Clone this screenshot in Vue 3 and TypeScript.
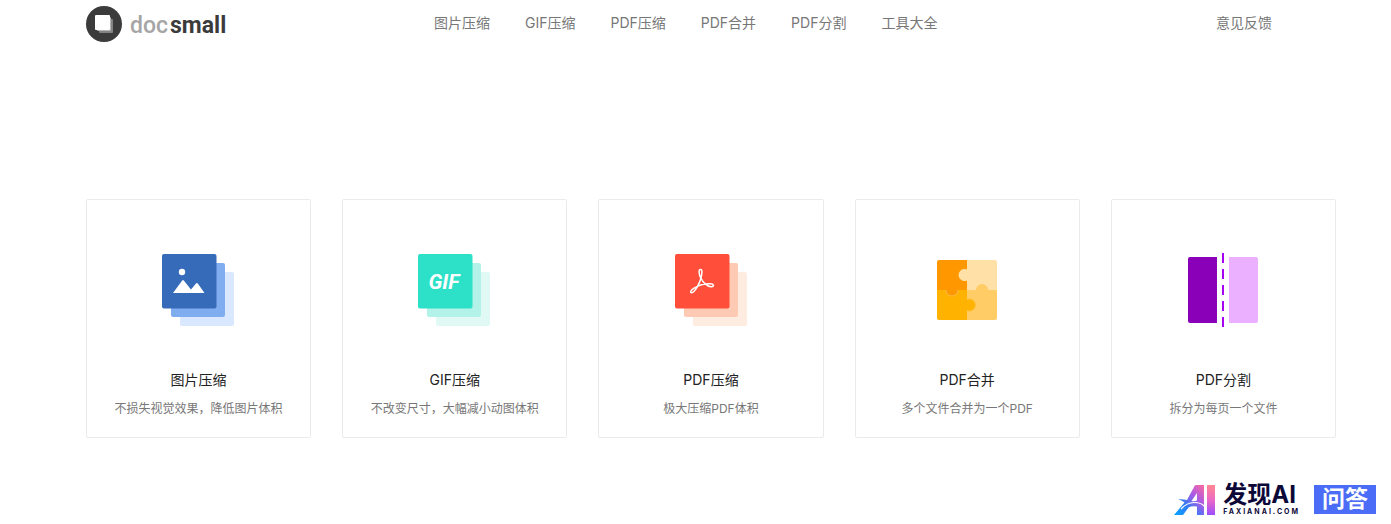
<script setup lang="ts">
type Kind = 'image' | 'gif' | 'pdf' | 'merge' | 'split'

interface Tool {
  kind: Kind
  title: string
  desc: string
  layers?: [string, string, string]
}

const links: string[] = ['图片压缩', 'GIF压缩', 'PDF压缩', 'PDF合并', 'PDF分割', '工具大全']

const tools: Tool[] = [
  { kind: 'image', title: '图片压缩', desc: '不损失视觉效果，降低图片体积', layers: ['#366bba', '#80adf0', '#d9e8ff'] },
  { kind: 'gif', title: 'GIF压缩', desc: '不改变尺寸，大幅减小动图体积', layers: ['#2de0c8', '#b3f2e8', '#e0f9f5'] },
  { kind: 'pdf', title: 'PDF压缩', desc: '极大压缩PDF体积', layers: ['#ff4f3a', '#ffcab3', '#ffece0'] },
  { kind: 'merge', title: 'PDF合并', desc: '多个文件合并为一个PDF' },
  { kind: 'split', title: 'PDF分割', desc: '拆分为每页一个文件' },
]
</script>

<template>
  <div class="page">
    <header class="header">
      <a class="logo" href="#" aria-label="docsmall">
        <svg class="logo-mark" viewBox="0 0 36 36" aria-hidden="true">
          <circle cx="18" cy="18" r="18" fill="#3b3b3b" />
          <rect x="13" y="13" width="14" height="14" rx="1" fill="#848484" />
          <rect x="11" y="11" width="14" height="14" rx="1" fill="#b5b5b5" />
          <rect x="9" y="9" width="15" height="15" rx="1" fill="#fff" />
        </svg>
        <span class="logo-text"><span class="logo-doc">doc</span><span class="logo-small">small</span></span>
      </a>
      <nav class="nav">
        <a v-for="link in links" :key="link" href="#">{{ link }}</a>
      </nav>
      <a class="feedback" href="#">意见反馈</a>
    </header>

    <main class="tools">
      <a v-for="tool in tools" :key="tool.kind" class="card" href="#">
        <svg class="icon" viewBox="0 0 74 74" aria-hidden="true">
          <g v-if="tool.layers" :transform="tool.kind === 'pdf' ? 'translate(1 0)' : undefined">
            <rect x="18" y="19" width="54" height="54" rx="2" :fill="tool.layers[2]" />
            <rect x="9" y="10" width="54" height="54" rx="2" :fill="tool.layers[1]" />
            <rect x="0" y="1" width="54.5" height="54.5" rx="2" :fill="tool.layers[0]" />
            <template v-if="tool.kind === 'image'">
              <circle cx="20" cy="19" r="3.2" fill="#fff" />
              <path d="M11 40 20.2 27.5Q21 26.5 21.8 27.5L29 36.6 34 30.5Q35 29.5 35.8 30.5L42.5 40Z" fill="#fff" />
            </template>
            <text v-else-if="tool.kind === 'gif'" class="gif" x="26" y="36" text-anchor="middle">GIF</text>
            <g v-else fill="none" stroke="#fff" stroke-width="1.5" stroke-linejoin="round" stroke-linecap="round">
              <path d="M25.5 16.5C23.2 16.5 24 21 25.5 24.5 28 29.5 32.5 34 36.500 33.700 39.500 33.500 39 30.800 35.500 30.700 30.500 30.500 24 32 19.500 34.800 15.500 37.200 14.800 39.800 16.700 39.700 19.500 39.500 24.500 31 26 25 27 20.500 27.600 16.500 25.500 16.500Z" />
            </g>
          </g>
          <g v-else-if="tool.kind === 'merge'" transform="translate(0 -1)">
            <path d="M9 8H37V38H7V10Q7 8 9 8Z" fill="#ff9800" />
            <path d="M37 8H65Q67 8 67 10V38H37Z" fill="#ffe1a8" />
            <path d="M7 38H37V68H9Q7 68 7 66Z" fill="#ffb300" />
            <path d="M37 38H67V66Q67 68 65 68H37Z" fill="#ffcc66" />
            <path d="M37 17.500A6 6 0 1 0 37 28.500Z" fill="#ffe1a8" />
            <path d="M16 38A6 6 0 0 0 28 38Z" fill="#ff9800" />
            <path d="M16 38A6 6 0 0 0 28 38" fill="none" stroke="#ffb94a" />
            <path d="M46 38A6 6 0 1 1 58 38Z" fill="#ffcc66" />
            <path d="M37 47.500A6 6 0 1 1 37 58.500Z" fill="#ffb300" />
            <path d="M37 47.500A6 6 0 1 1 37 58.500" fill="none" stroke="#ffc13c" />
          </g>
          <template v-else>
            <path d="M4 4H31V70H4Q2 70 2 68V6Q2 4 4 4Z" fill="#8a00b8" />
            <path d="M43 4H70Q72 4 72 6V68Q72 70 70 70H43Z" fill="#ebb0ff" />
            <path d="M37 0V74" stroke="#a600f5" stroke-width="2" stroke-dasharray="10 6" />
          </template>
        </svg>
        <h2>{{ tool.title }}</h2>
        <p>{{ tool.desc }}</p>
      </a>
    </main>

    <footer class="footer">
      <a class="brand" href="#">
        <svg class="brand-mark" viewBox="0 0 42 30" aria-hidden="true">
          <defs>
            <linearGradient id="leg" x1="0" y1="1" x2="1" y2="0">
              <stop offset="0" stop-color="#05a6ff" />
              <stop offset="0.35" stop-color="#2f7df5" />
              <stop offset="0.65" stop-color="#a85be8" />
              <stop offset="1" stop-color="#ff6a9c" />
            </linearGradient>
            <linearGradient id="bar" x1="0" y1="0" x2="0" y2="1">
              <stop offset="0" stop-color="#ff8790" />
              <stop offset="0.5" stop-color="#ec69c5" />
              <stop offset="1" stop-color="#9a4dff" />
            </linearGradient>
          </defs>
          <path d="M23 0H31V30H24V21.500Q19 20.500 15.500 22.500L10 30H1L11.500 17.500Q8.500 15 5 14.500 9.500 13.800 14 15L20.500 3Q21.500 0 23 0Z" fill="url(#leg)" />
          <path d="M24 8V15.500Q21 16.500 18.500 16Z" fill="#fff" />
          <path d="M8 24Q14 17.500 21 17.500T31 21" fill="none" stroke="#fff" stroke-width="1.2" />
          <rect x="34" y="0" width="8" height="30" fill="url(#bar)" />
        </svg>
        <span class="brand-text">
          <span class="brand-name">发现AI</span>
          <span class="brand-url">FAXIANAI.COM</span>
        </span>
      </a>
      <a class="badge" href="#">问答</a>
    </footer>
  </div>
</template>

<style>
body {
  margin: 0;
  background: #fff;
}
</style>

<style scoped>
.page {
  font-family: Inter, "Noto Sans CJK SC", sans-serif;
  color: #777;
}

a {
  color: inherit;
  text-decoration: none;
}

.header {
  display: flex;
  align-items: center;
  padding: 0 119px 0 86px;
  height: 48px;
  font-size: 14px;
  line-height: 20px;
}

.logo {
  display: flex;
  align-items: center;
  gap: 8px;
  width: 348px;
}

.logo-mark {
  width: 36px;
  height: 36px;
}

.logo-text {
  display: flex;
  gap: 2px;
  padding-top: 3px;
  font: 23px/28px Roboto, sans-serif;
}

.logo-doc {
  color: #a5a5a5;
  font-weight: 500;
}

.logo-small {
  color: #3b3b3b;
  font-weight: 700;
}

.nav {
  display: flex;
  gap: 35px;
  padding-bottom: 2px;
}

.feedback {
  margin-left: auto;
  padding-bottom: 2px;
}

.tools {
  display: grid;
  grid-template-columns: repeat(5, 1fr);
  gap: 31px;
  margin-top: 151px;
  padding: 0 55px 0 86px;
}

.card {
  display: flex;
  flex-direction: column;
  align-items: center;
  padding: 53px 8px 18px;
  border: 1px solid #ebebeb;
  border-radius: 2px;
  text-align: center;
}

.icon {
  width: 74px;
  height: 74px;
}

.gif {
  font: italic 700 21px Roboto, sans-serif;
  fill: #fff;
}

.card h2 {
  margin: 43px 0 9px;
  color: #222;
  font-size: 14px;
  font-weight: 400;
  line-height: 20px;
}

.card p {
  margin: 0;
  font-size: 12px;
  line-height: 20px;
}

.footer {
  display: flex;
  justify-content: flex-end;
  align-items: center;
  gap: 14px;
  margin-top: 46px;
  padding: 0 15px 8px;
}

.brand {
  display: flex;
  align-items: center;
  gap: 8px;
  color: #0c0838;
}

.brand-mark {
  width: 42px;
  height: 30px;
}

.brand-text {
  display: flex;
  flex-direction: column;
}

.brand-name {
  font-size: 24px;
  font-weight: 700;
  line-height: 22px;
}

.brand-url {
  margin-top: 2px;
  font-size: 7px;
  font-weight: 700;
  line-height: 7px;
  letter-spacing: 2px;
}

.badge {
  padding: 0 8px;
  background: #4a6cf7;
  color: #fff;
  font-size: 23px;
  font-weight: 700;
  line-height: 29px;
}
</style>
